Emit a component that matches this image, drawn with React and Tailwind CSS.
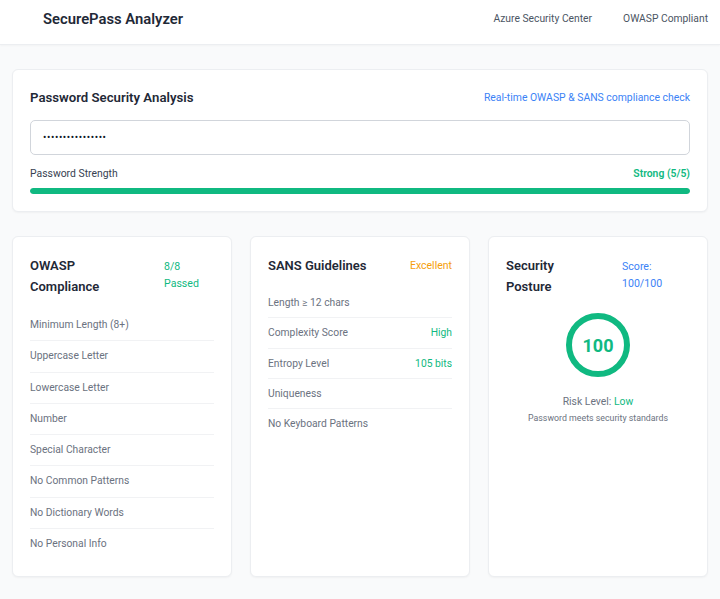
import React from "react";

const owasp = [
  "Minimum Length (8+)",
  "Uppercase Letter",
  "Lowercase Letter",
  "Number",
  "Special Character",
  "No Common Patterns",
  "No Dictionary Words",
  "No Personal Info",
];

const sans = [
  ["Length ≥ 12 chars", ""],
  ["Complexity Score", "High"],
  ["Entropy Level", "105 bits"],
  ["Uniqueness", ""],
  ["No Keyboard Patterns", ""],
];

export default function App() {
  return (
    <div
      className="min-h-[599px] bg-[#f9fafb]"
      style={{ fontFamily: "Roboto, 'Noto Sans', sans-serif" }}
    >
      <header className="h-[45px] bg-white border-b border-[#eceef1] shadow-[0_1px_2px_rgba(0,0,0,0.03)] flex items-start pt-[7px] pl-[43px] pr-[12px]">
        <div className="text-[14.8px] leading-[24px] font-semibold text-[#1f2937]">
          SecurePass Analyzer
        </div>
        <div className="ml-auto flex gap-[31px] text-[10.3px] leading-[24px] text-[#4b5563]">
          <span>Azure Security Center</span>
          <span>OWASP Compliant</span>
        </div>
      </header>

      <main className="px-[12px] pt-[24px]">
        <section className="bg-white rounded-[6px] border border-[#eceef1] shadow-[0_1px_2px_rgba(0,0,0,0.04)] px-[17px] pt-[18px] pb-[17px]">
          <div className="flex items-center justify-between h-[20px]">
            <h2 className="text-[13.2px] font-semibold text-[#1f2937]">
              Password Security Analysis
            </h2>
            <span className="text-[10.4px] text-[#3b82f6]">
              Real-time OWASP &amp; SANS compliance check
            </span>
          </div>
          <input
            type="password"
            readOnly
            value="abcdefghijklmnop"
            className="mt-[12px] w-full h-[35px] rounded-[5px] border-[1.5px] border-[#d1d5db] px-[12px] text-[10px] tracking-[0.6px] text-[#111827] outline-none"
          />
          <div className="mt-[11px] flex items-center justify-between text-[10.4px] leading-[16px]">
            <span className="text-[#374151]">Password Strength</span>
            <span className="text-[#10b981] font-semibold">Strong (5/5)</span>
          </div>
          <div className="mt-[6px] h-[6px] rounded-full bg-[#e5e7eb] overflow-hidden">
            <div className="h-full w-full rounded-full bg-[#10b981]" />
          </div>
        </section>

        <div className="mt-[24px] grid grid-cols-3 gap-[18px]">
          {/* OWASP */}
          <section className="bg-white rounded-[6px] border border-[#eceef1] shadow-[0_1px_2px_rgba(0,0,0,0.04)] px-[17px] pt-[18px] pb-[17px] h-[341px]">
            <div className="flex items-start">
              <h3 className="w-[134px] text-[13px] leading-[21px] font-semibold text-[#1f2937]">
                OWASP
                <br />
                Compliance
              </h3>
              <div className="text-[10.6px] leading-[17px] text-[#10b981] pt-[3px]">
                8/8
                <br />
                Passed
              </div>
            </div>
            <ul className="mt-[13px]">
              {owasp.map((t, i) => (
                <li
                  key={t}
                  className={
                    "py-[7px] leading-[16.3px] text-[10.3px] text-[#6b7280] " +
                    (i < owasp.length - 1 ? "border-b border-[#f1f2f4]" : "")
                  }
                >
                  {t}
                </li>
              ))}
            </ul>
          </section>

          {/* SANS */}
          <section className="bg-white rounded-[6px] border border-[#eceef1] shadow-[0_1px_2px_rgba(0,0,0,0.04)] px-[17px] pt-[18px] pb-[17px] h-[341px]">
            <div className="flex items-center justify-between h-[21px]">
              <h3 className="text-[13px] font-semibold text-[#1f2937]">
                SANS Guidelines
              </h3>
              <span className="text-[10.5px] text-[#f59e0b]">Excellent</span>
            </div>
            <ul className="mt-[12px]">
              {sans.map(([t, v], i) => (
                <li
                  key={t}
                  className={
                    "flex justify-between py-[7px] leading-[15.25px] text-[10.3px] text-[#6b7280] " +
                    (i < sans.length - 1 ? "border-b border-[#f1f2f4]" : "")
                  }
                >
                  <span>{t}</span>
                  {v && <span className="text-[#10b981]">{v}</span>}
                </li>
              ))}
            </ul>
          </section>

          {/* Posture */}
          <section className="bg-white rounded-[6px] border border-[#eceef1] shadow-[0_1px_2px_rgba(0,0,0,0.04)] px-[17px] pt-[18px] pb-[17px] h-[341px]">
            <div className="flex items-start">
              <h3 className="w-[116px] text-[13px] leading-[21px] font-semibold text-[#1f2937]">
                Security
                <br />
                Posture
              </h3>
              <div className="text-[10.6px] leading-[17px] text-[#3b82f6] pt-[3px]">
                Score:
                <br />
                100/100
              </div>
            </div>
            <div className="mt-[16px] flex flex-col items-center">
              <div className="w-[64px] h-[64px] rounded-full border-[6px] border-[#10b981] flex items-center justify-center">
                <span className="text-[18px] font-bold text-[#10b981]">100</span>
              </div>
              <div className="mt-[17px] text-[10.4px] leading-[16px] text-[#6b7280]">
                Risk Level: <span className="text-[#10b981]">Low</span>
              </div>
              <div className="text-[8.8px] leading-[16px] text-[#6b7280]">
                Password meets security standards
              </div>
            </div>
          </section>
        </div>
      </main>
    </div>
  );
}
